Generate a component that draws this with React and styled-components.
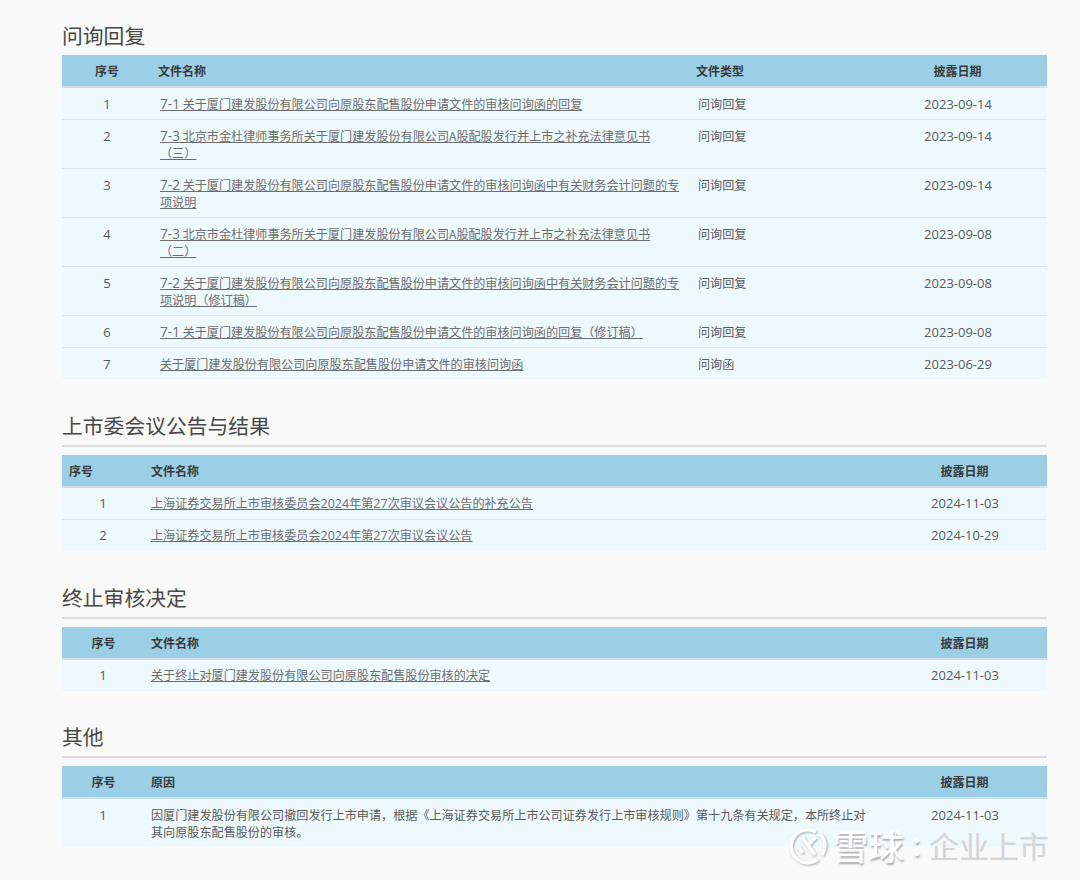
import React from 'react';
import styled, { createGlobalStyle } from 'styled-components';

const GlobalStyle = createGlobalStyle`
	html, body {
		margin: 0;
		padding: 0;
		background: #f9f9f9;
	}
	body {
		font-family: "Noto Sans CJK SC", "Open Sans", sans-serif;
		font-size: 12px;
		color: #555;
	}
`;

const Page = styled.div`
	position: relative;
	width: 1080px;
	height: 880px;
	box-sizing: border-box;
	padding: 0 33px 0 62px;
	overflow: hidden;
`;

const FirstTitle = styled.h2`
	margin: 0;
	padding-top: 19px;
	height: 55px;
	box-sizing: border-box;
	font-size: 20.8px;
	font-weight: 400;
	line-height: 32px;
	color: #484848;
`;

const SectionTitle = styled.h2`
	margin: 27.8px 0 8px;
	height: 38px;
	border-bottom: 2px solid #ddd;
	font-size: 20.8px;
	font-weight: 400;
	line-height: 36px;
	color: #484848;
`;

const Table = styled.table`
	width: 985px;
	table-layout: fixed;
	border-collapse: collapse;
	background: #eef9fe;
`;

const Th = styled.th`
	height: 31px;
	padding: ${(p) => (p.$center ? '0 6px 0 7px' : '0 7px')};
	background: #9acfe5;
	border-bottom: 2px solid #d2dfe4;
	font-size: 12px;
	font-weight: 700;
	color: #3a3a3a;
	text-align: ${(p) => (p.$center ? 'center' : 'left')};
`;

const Td = styled.td`
	padding: 6.5px ${(p) => (p.$inset ? '9px' : '7px')} 7.5px;
	font-size: 12.12px;
	line-height: 17px;
	vertical-align: top;
	color: #5a5a5a;
	text-align: ${(p) => (p.$center ? 'center' : 'left')};
	tr:not(:last-child) > & {
		border-bottom: 1px solid #dde3e8;
	}
`;

const FirstSeqCell = styled(Td)`
	padding-left: 8px;
	text-align: center;
`;

const DateCell = styled(Td)`
	padding-left: 9px;
	padding-right: 7px;
	text-align: center;
`;

const Num = styled.span`
	font-family: "Open Sans", sans-serif;
	font-size: 13px;
	line-height: 1;
`;

const Prefix = styled(Num)`
	font-size: 13.6px;
`;

const DocLink = styled.a`
	color: #6e6e6e;
	text-decoration: underline;

	${Num} {
		font-size: 12.5px;
	}
	${Prefix} {
		font-size: 13.6px;
	}
`;

const Watermark = styled.div`
	position: absolute;
	left: 789px;
	top: 827px;
	display: flex;
	align-items: center;
`;

const BrandLogo = styled.svg`
	filter: drop-shadow(1px 1px 1px rgba(0, 0, 0, 0.3));
`;

const BrandName = styled.span`
	margin: -3px 0 0 6px;
	font-size: 35.5px;
	line-height: 38px;
	color: #fff;
	text-shadow: 0 0 1px #fff, 1px 2px 2px rgba(0, 0, 0, 0.35);
`;

const BrandColon = styled.span`
	width: 19px;
	margin-top: -3px;
	padding-left: 6px;
	font-size: 26px;
	line-height: 38px;
	color: #fff;
	text-shadow: 0 0 1px #fff, 1px 2px 2px rgba(0, 0, 0, 0.35);
`;

const BrandTail = styled.span`
	margin-top: -3px;
	font-size: 30px;
	line-height: 38px;
	color: #d6d6d6;
	text-shadow: 0 0 1px #e4e4e4;
`;

const n = (text) => <Num>{text}</Num>;
const p = (text) => <Prefix>{text}</Prefix>;

const inquiryRows = [
	[<>{p('7-1')} 关于厦门建发股份有限公司向原股东配售股份申请文件的审核问询函的回复</>, '问询回复', '2023-09-14'],
	[<>{p('7-3')} 北京市金杜律师事务所关于厦门建发股份有限公司A股配股发行并上市之补充法律意见书<br />（三）</>, '问询回复', '2023-09-14'],
	[<>{p('7-2')} 关于厦门建发股份有限公司向原股东配售股份申请文件的审核问询函中有关财务会计问题的专项说明</>, '问询回复', '2023-09-14'],
	[<>{p('7-3')} 北京市金杜律师事务所关于厦门建发股份有限公司A股配股发行并上市之补充法律意见书<br />（二）</>, '问询回复', '2023-09-08'],
	[<>{p('7-2')} 关于厦门建发股份有限公司向原股东配售股份申请文件的审核问询函中有关财务会计问题的专项说明（修订稿）</>, '问询回复', '2023-09-08'],
	[<>{p('7-1')} 关于厦门建发股份有限公司向原股东配售股份申请文件的审核问询函的回复（修订稿）</>, '问询回复', '2023-09-08'],
	['关于厦门建发股份有限公司向原股东配售股份申请文件的审核问询函', '问询函', '2023-06-29'],
];

const meetingRows = [
	[<>上海证券交易所上市审核委员会{n('2024')}年第{n('27')}次审议会议公告的补充公告</>, '2024-11-03'],
	[<>上海证券交易所上市审核委员会{n('2024')}年第{n('27')}次审议会议公告</>, '2024-10-29'],
];

const WideCols = () => (
	<colgroup>
		<col width="82" />
		<col width="737" />
		<col width="166" />
	</colgroup>
);

const App = () => {
	return (
		<Page>
			<GlobalStyle />
			<FirstTitle>问询回复</FirstTitle>
			<Table>
				<colgroup>
					<col width="89" />
					<col width="538" />
					<col width="178" />
					<col width="180" />
				</colgroup>
				<thead>
					<tr>
						<Th $center>序号</Th>
						<Th>文件名称</Th>
						<Th>文件类型</Th>
						<Th $center>披露日期</Th>
					</tr>
				</thead>
				<tbody>
					{inquiryRows.map((row, i) => (
						<tr key={i}>
							<FirstSeqCell><Num>{i + 1}</Num></FirstSeqCell>
							<Td $inset><DocLink href="#">{row[0]}</DocLink></Td>
							<Td $inset>{row[1]}</Td>
							<DateCell><Num>{row[2]}</Num></DateCell>
						</tr>
					))}
				</tbody>
			</Table>

			<SectionTitle>上市委会议公告与结果</SectionTitle>
			<Table>
				<WideCols />
				<thead>
					<tr>
						<Th>序号</Th>
						<Th>文件名称</Th>
						<Th $center>披露日期</Th>
					</tr>
				</thead>
				<tbody>
					{meetingRows.map((row, i) => (
						<tr key={i}>
							<Td $center><Num>{i + 1}</Num></Td>
							<Td><DocLink href="#">{row[0]}</DocLink></Td>
							<DateCell><Num>{row[1]}</Num></DateCell>
						</tr>
					))}
				</tbody>
			</Table>

			<SectionTitle>终止审核决定</SectionTitle>
			<Table>
				<WideCols />
				<thead>
					<tr>
						<Th $center>序号</Th>
						<Th>文件名称</Th>
						<Th $center>披露日期</Th>
					</tr>
				</thead>
				<tbody>
					<tr>
						<Td $center><Num>1</Num></Td>
						<Td><DocLink href="#">关于终止对厦门建发股份有限公司向原股东配售股份审核的决定</DocLink></Td>
						<DateCell><Num>2024-11-03</Num></DateCell>
					</tr>
				</tbody>
			</Table>

			<SectionTitle>其他</SectionTitle>
			<Table>
				<WideCols />
				<thead>
					<tr>
						<Th $center>序号</Th>
						<Th>原因</Th>
						<Th $center>披露日期</Th>
					</tr>
				</thead>
				<tbody>
					<tr>
						<Td $center><Num>1</Num></Td>
						<Td>因厦门建发股份有限公司撤回发行上市申请，根据《上海证券交易所上市公司证券发行上市审核规则》第十九条有关规定，本所终止对其向原股东配售股份的审核。</Td>
						<DateCell><Num>2024-11-03</Num></DateCell>
					</tr>
				</tbody>
			</Table>

			<Watermark>
				<BrandLogo width="38" height="38" viewBox="0 0 38 38" fill="none" stroke="#fff" strokeWidth="3.6">
					<path d="M27 5 A16.5 16.5 0 1 0 29 32" />
					<path d="M31 7 A16.5 16.5 0 0 1 33 28" />
					<path d="M13 10 L26 28 M19 18 L27 10 M9 20 L14 26" />
				</BrandLogo>
				<BrandName>雪球</BrandName>
				<BrandColon>：</BrandColon>
				<BrandTail>企业上市</BrandTail>
			</Watermark>
		</Page>
	);
};

export default App;
